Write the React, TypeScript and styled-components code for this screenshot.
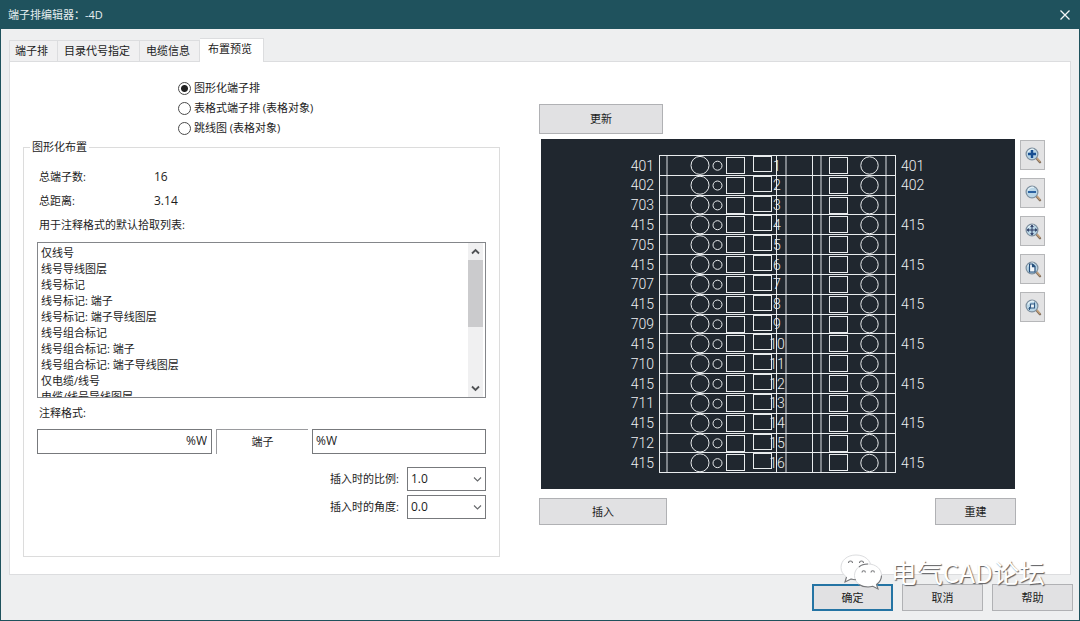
import React, { useState } from "react";
import styled, { createGlobalStyle, css } from "styled-components";

const GlobalStyle = createGlobalStyle`
  *, *::before, *::after { box-sizing: border-box; }
  body {
    margin: 0;
    font-family: "Open Sans", "Noto Sans CJK SC", sans-serif;
    font-size: 11px;
    line-height: 16px;
    color: #1c1c1c;
  }
  button, input, select { font: inherit; color: inherit; }
`;

const Dialog = styled.div`
  position: relative;
  display: flex;
  flex-direction: column;
  min-height: 100vh;
  background: #eeeff0;
  border: 1px solid #1f525d;
  border-top: 0;
`;

const TitleBar = styled.header`
  display: flex;
  align-items: center;
  justify-content: space-between;
  height: 29px;
  padding: 0 8px 0 7px;
  background: #1f525d;
  color: #e6eef0;
`;

const Title = styled.h1`
  margin: 0;
  font-size: 11px;
  font-weight: 400;
`;

const CloseButton = styled.button`
  display: flex;
  padding: 0;
  border: 0;
  background: none;
`;

const Tabs = styled.div`
  display: flex;
  align-items: flex-end;
  padding: 9px 8px 0;
`;

const Tab = styled.button<{ $active?: boolean }>`
  height: 21px;
  padding: 0 9px 0 6px;
  border: 1px solid #dcdddf;
  border-left-width: 0;
  border-bottom: 0;
  background: #f0f0f1;
  white-space: nowrap;
  &:first-child {
    padding-left: 5px;
    border-left-width: 1px;
  }
  ${(p) =>
    p.$active &&
    css`
      z-index: 1;
      height: 24px;
      margin-bottom: -1px;
      padding: 0 11px 4px 8px;
      background: #fff;
    `}
`;

const Panel = styled.main`
  flex: 1;
  display: grid;
  grid-template-columns: 477fr 506fr;
  column-gap: 39px;
  margin: 0 8px;
  padding: 0 25px 17px 13px;
  border: 1px solid #dcdddf;
  background: #fff;
`;

const Settings = styled.section`
  display: flex;
  flex-direction: column;
  min-width: 0;
  padding-top: 16px;
`;

const RadioList = styled.div`
  display: flex;
  flex-direction: column;
  margin: 0 0 1px 155px;
`;

const RadioLabel = styled.label`
  display: flex;
  align-items: center;
  gap: 3px;
  height: 20px;
`;

const Radio = styled.input`
  appearance: none;
  width: 13px;
  height: 13px;
  margin: 0;
  border: 1px solid #4a4a4a;
  border-radius: 50%;
  background: #fff;
  &:checked { background: radial-gradient(circle, #222 3px, #fff 4px); }
`;

const Group = styled.fieldset`
  flex: 1;
  min-width: 0;
  margin: 0;
  padding: 10px 13px 37px;
  border: 1px solid #dcdcdc;
`;

const Legend = styled.legend`
  margin-left: -7px;
  padding: 0 2px;
`;

const Facts = styled.dl`
  display: grid;
  grid-template-columns: 115px 1fr;
  margin: 0 0 0 2px;
  line-height: 24px;
`;

const Value = styled.dd`
  margin: 0;
  font-size: 12px;
`;

const BlockLabel = styled.label<{ $height: number }>`
  display: block;
  margin-left: 2px;
  line-height: ${(p) => p.$height}px;
`;

const ListFrame = styled.div`
  display: flex;
  height: 156px;
  margin: 5px 0 6px;
  padding-right: 2px;
  border: 1px solid #84868a;
`;

const ListBox = styled.select`
  flex: 1;
  min-width: 0;
  height: 100%;
  padding: 1px 0 0;
  border: 0;
  outline: 0;
  background: #fff;
  overflow: hidden;
  scrollbar-width: none;
`;

const ListOption = styled.option`
  height: 16px;
  min-height: 16px;
  padding: 0 3px;
  line-height: 16px;
`;

const ScrollBar = styled.div`
  display: flex;
  flex-direction: column;
  width: 15px;
  background: #f0f0f1;
`;

const ScrollButton = styled.button`
  display: flex;
  align-items: center;
  justify-content: center;
  height: 17px;
  padding: 0;
  border: 0;
  background: none;
`;

const ScrollTrack = styled.div`
  flex: 1;
`;

const ScrollThumb = styled.div`
  height: 67px;
  background: #cbcbcd;
`;

const FormatRow = styled.div`
  display: grid;
  grid-template-columns: 175fr 92fr 174fr;
  column-gap: 4px;
  height: 25px;
  margin: 7px 0 13px;
`;

const TextBox = styled.input<{ $right?: boolean }>`
  min-width: 0;
  padding: 0 4px 2px 3px;
  border: 1px solid #77797c;
  border-radius: 0;
  font-size: 12px;
  text-align: ${(p) => (p.$right ? "right" : "left")};
`;

const SunkenText = styled.div`
  border: solid #9a9b9e;
  border-width: 1px 0 0 1px;
  line-height: 23px;
  text-align: center;
`;

const ComboRow = styled.div`
  display: flex;
  align-items: center;
  justify-content: flex-end;
  gap: 8px;
  margin-bottom: 4px;
  &:last-child { margin-bottom: 0; }
`;

const ComboFrame = styled.div`
  position: relative;
  width: 79px;
  height: 24px;
`;

const ComboSelect = styled.select`
  appearance: none;
  width: 100%;
  height: 100%;
  padding: 0 18px 1px 3px;
  border: 1px solid #77797c;
  border-radius: 0;
  background: #fff;
  font-size: 12px;
`;

const ComboArrow = styled.svg`
  position: absolute;
  top: 9px;
  right: 4px;
  pointer-events: none;
`;

const Preview = styled.section`
  display: grid;
  grid-template-columns: 1fr 25px;
  align-content: start;
  column-gap: 4px;
  min-width: 0;
  padding-top: 42px;
`;

const UpdateRow = styled.div`
  grid-column: 1 / -1;
  height: 30px;
`;

const PushButton = styled.button<{ $width: number; $primary?: boolean }>`
  width: ${(p) => p.$width}px;
  height: 100%;
  padding: 0;
  border: ${(p) => (p.$primary ? "2px solid #2474a4" : "1px solid #b0b1b4")};
  background: #e1e1e3;
`;

const CanvasSlot = styled.div`
  margin-top: 5px;
  padding: 0 1px 0 2px;
`;

const Drawing = styled.svg`
  display: block;
  width: 100%;
  height: 350px;
  background: #20272f;
  font-family: Roboto, sans-serif;
  font-size: 14px;
  font-weight: 300;
`;

const ZoomTools = styled.div`
  display: flex;
  flex-direction: column;
  gap: 8px;
  padding-top: 6px;
`;

const ToolButton = styled.button`
  display: flex;
  flex: none;
  align-items: center;
  justify-content: center;
  height: 30px;
  padding: 0;
  border: 1px solid #b6b7b9;
  background: #e3e3e4;
`;

const PreviewActions = styled.div`
  grid-column: 1;
  display: flex;
  justify-content: space-between;
  height: 27px;
  margin-top: 9px;
`;

const Footer = styled.footer`
  display: flex;
  justify-content: flex-end;
  gap: 9px;
  height: 45px;
  padding: 9px 6px;
`;

const Watermark = styled.div`
  position: absolute;
  right: 34px;
  bottom: 29px;
  display: flex;
  align-items: center;
  gap: 8px;
  font-family: "Noto Sans CJK SC", sans-serif;
  font-size: 26px;
  line-height: 38px;
  color: #fff;
  text-shadow: 1px 1px 1px #5c5d60;
  pointer-events: none;
`;

const tabNames = ["端子排", "目录代号指定", "电缆信息", "布置预览"];
const layouts = ["图形化端子排", "表格式端子排 (表格对象)", "跳线图 (表格对象)"];
const formats = [
  "仅线号",
  "线号导线图层",
  "线号标记",
  "线号标记: 端子",
  "线号标记: 端子导线图层",
  "线号组合标记",
  "线号组合标记: 端子",
  "线号组合标记: 端子导线图层",
  "仅电缆/线号",
  "电缆/线号导线图层",
];

const terminals: [string, string][] = [
  ["401", "401"],
  ["402", "402"],
  ["703", ""],
  ["415", "415"],
  ["705", ""],
  ["415", "415"],
  ["707", ""],
  ["415", "415"],
  ["709", ""],
  ["415", "415"],
  ["710", ""],
  ["415", "415"],
  ["711", ""],
  ["415", "415"],
  ["712", ""],
  ["415", "415"],
];

const stripTop = 16.5;
const pitch = 19.83;
const stripBottom = stripTop + pitch * terminals.length;

function TerminalStrip() {
  return (
    <Drawing viewBox="0 0 474 350" role="img" aria-label="端子排">
      <g fill="none" stroke="#e9ecee" strokeWidth="1">
        {[118.5, 235.5, 271.5, 354.5].map((x) => (
          <path key={x} d={`M${x} ${stripTop}V${stripBottom}`} />
        ))}
        <g stroke="#a6abb0">
          {[126, 245, 280, 345].map((x) => (
            <path key={x} d={`M${x} ${stripTop}V${stripBottom}`} strokeWidth="1.4" />
          ))}
        </g>
        {Array.from({ length: terminals.length + 1 }, (_, i) => {
          const y = Math.round(stripTop + i * pitch - 0.5) + 0.5;
          return <path key={i} d={`M118 ${y}H355`} strokeWidth="1.2" />;
        })}
        {terminals.map((_, i) => {
          const y = stripTop + i * pitch;
          const top = Math.round(y - 0.5) + 0.5;
          return (
            <g key={i}>
              <circle cx="159" cy={y + 9.9} r="9" />
              <circle cx="176.5" cy={y + 10.2} r="4.5" />
              <rect x="185.5" y={top + 2} width="18" height="16" />
              <rect x="212.5" y={top + 1} width="18" height="15" />
              <rect x="288.5" y={top + 2} width="18" height="16" />
              <circle cx="328.5" cy={y + 10} r="8.7" />
            </g>
          );
        })}
      </g>
      <g fill="#eef0f2">
        {terminals.map(([left, right], i) => {
          const y = Math.round(stripTop + i * pitch + 15);
          return (
            <g key={i}>
              <text x="113" y={y} textAnchor="end">{left}</text>
              <text x="236" y={y} textAnchor="middle">{i + 1}</text>
              {right && <text x="360" y={y}>{right}</text>}
            </g>
          );
        })}
      </g>
    </Drawing>
  );
}

const zoomTools: { name: string; mark: React.ReactNode }[] = [
  { name: "放大", mark: <path d="M8 4v8M4 8h8" stroke="#174f92" strokeWidth="2.4" /> },
  { name: "缩小", mark: <path d="M4 8h8" stroke="#2c62a0" strokeWidth="2" /> },
  {
    name: "平移",
    mark: (
      <g>
        <path d="M8 4v8M4 8h8" stroke="#27365f" strokeWidth="1" />
        <path d="M8 2.5l2 2.3H6zM8 13.5l2-2.3H6zM2.5 8l2.3-2v4zM13.5 8l-2.3-2v4z" fill="#27365f" />
      </g>
    ),
  },
  {
    name: "全部",
    mark: <path d="M5.5 4h3.2l2.3 2.4V12H5.5zM8.5 4v2.6H11" fill="#f3f8fb" stroke="#254f7c" strokeWidth="1.2" />,
  },
  {
    name: "窗口",
    mark: (
      <g>
        <path d="M6.5 6h4v4h-4z" fill="#edf4f8" stroke="#305a84" strokeWidth="1.1" />
        <path d="M4.5 10.5h2M5.5 9v3M10.5 4.5V6" stroke="#305a84" strokeWidth="1" />
      </g>
    ),
  },
];

function Magnifier({ children }: { children: React.ReactNode }) {
  return (
    <svg width="18" height="18" viewBox="0 0 18 18" fill="none">
      <path d="M12.5 12.2l3.5 4" stroke="#84705d" strokeWidth="2.4" strokeLinecap="round" />
      <path d="M12.8 12l3.3 3.6" stroke="#cba57c" strokeWidth="1.2" />
      <circle cx="8" cy="8" r="5.9" fill="#b9d5e6" stroke="#7f909f" strokeWidth="1.2" />
      <path d="M4 6.5a4.6 4.6 0 0 1 6-3" stroke="#e5f2f8" strokeWidth="1.2" />
      {children}
    </svg>
  );
}

function Combo({ id, label, value }: { id: string; label: string; value: string }) {
  return (
    <ComboRow>
      <label htmlFor={id}>{label}</label>
      <ComboFrame>
        <ComboSelect id={id} defaultValue={value}>
          <option>{value}</option>
        </ComboSelect>
        <ComboArrow width="9" height="7" viewBox="0 0 9 7" fill="none">
          <path d="M1 1.5l3.5 3.5L8 1.5" stroke="#66686b" strokeWidth="1.1" />
        </ComboArrow>
      </ComboFrame>
    </ComboRow>
  );
}

function ChatBubbles() {
  return (
    <svg width="44" height="38" viewBox="0 0 44 38">
      <g fill="#fff" stroke="#dcdddf" strokeWidth="1">
        <path d="M17 2C8 2 2 7.5 2 14.5c0 4 2 7 5.5 9.5L6 29l6-3c2 .6 4 .8 6 .7C27 26 32 21 32 14.5 32 7.5 26 2 17 2z" />
        <path d="M29 11c-8 0-13.5 5-13.5 11.5S21 34 29 34c1.7 0 3.3-.3 4.8-.7L39 36l-1.5-4.5c3.3-2.3 5-5.4 5-9C42.5 16 37 11 29 11z" />
      </g>
      <g fill="none" stroke="#77787b" strokeWidth="1.1">
        <path d="M7.500 24L6 29l6-3c2 .6 3.500 .8 5 .7" />
        <path d="M20 14c2-2 5-3 9-3M20 31.500c2.500 1.800 5.500 2.500 9 2.500 1.700 0 3.300-.3 4.800-.7L39 36l-1.500-4.500c3.300-2.300 5-5.400 5-9" />
        <path d="M9.5 10a2 2 0 0 1 4 0M20.5 10a2 2 0 0 1 4 0M23 19.5a1.7 1.7 0 0 1 3.4 0M32 19.5a1.7 1.7 0 0 1 3.4 0" />
      </g>
    </svg>
  );
}

export default function App() {
  const [layout, setLayout] = useState(0);
  return (
    <>
      <GlobalStyle />
      <Dialog>
        <TitleBar>
          <Title>端子排编辑器：-4D</Title>
          <CloseButton aria-label="关闭">
            <svg width="12" height="12" viewBox="0 0 12 12">
              <path d="M1.5 1.5l9 9M10.5 1.5l-9 9" stroke="#f2f6f7" strokeWidth="1.3" />
            </svg>
          </CloseButton>
        </TitleBar>
        <Tabs role="tablist">
          {tabNames.map((name, i) => (
            <Tab key={name} role="tab" aria-selected={i === 3} $active={i === 3}>
              {name}
            </Tab>
          ))}
        </Tabs>
        <Panel>
          <Settings>
            <RadioList>
              {layouts.map((name, i) => (
                <RadioLabel key={name}>
                  <Radio type="radio" name="layout" checked={layout === i} onChange={() => setLayout(i)} />
                  {name}
                </RadioLabel>
              ))}
            </RadioList>
            <Group>
              <Legend>图形化布置</Legend>
              <Facts>
                <dt>总端子数:</dt>
                <Value>16</Value>
                <dt>总距离:</dt>
                <Value>3.14</Value>
              </Facts>
              <BlockLabel htmlFor="formats" $height={24}>用于注释格式的默认拾取列表:</BlockLabel>
              <ListFrame>
                <ListBox id="formats" size={10}>
                  {formats.map((f) => (
                    <ListOption key={f}>{f}</ListOption>
                  ))}
                </ListBox>
                <ScrollBar>
                  <ScrollButton aria-label="向上">
                    <svg width="9" height="7" viewBox="0 0 9 7" fill="none">
                      <path d="M1 5.5l3.5-3.5L8 5.5" stroke="#505255" strokeWidth="1.8" />
                    </svg>
                  </ScrollButton>
                  <ScrollTrack>
                    <ScrollThumb />
                  </ScrollTrack>
                  <ScrollButton aria-label="向下">
                    <svg width="9" height="7" viewBox="0 0 9 7" fill="none">
                      <path d="M1 1.5l3.5 3.5L8 1.5" stroke="#505255" strokeWidth="1.8" />
                    </svg>
                  </ScrollButton>
                </ScrollBar>
              </ListFrame>
              <BlockLabel htmlFor="format-left" $height={18}>注释格式:</BlockLabel>
              <FormatRow>
                <TextBox id="format-left" defaultValue="%W" $right />
                <SunkenText>端子</SunkenText>
                <TextBox aria-label="注释格式" defaultValue="%W" />
              </FormatRow>
              <Combo id="scale" label="插入时的比例:" value="1.0" />
              <Combo id="angle" label="插入时的角度:" value="0.0" />
            </Group>
          </Settings>
          <Preview>
            <UpdateRow>
              <PushButton $width={124}>更新</PushButton>
            </UpdateRow>
            <CanvasSlot>
              <TerminalStrip />
            </CanvasSlot>
            <ZoomTools>
              {zoomTools.map((tool) => (
                <ToolButton key={tool.name} aria-label={tool.name}>
                  <Magnifier>{tool.mark}</Magnifier>
                </ToolButton>
              ))}
            </ZoomTools>
            <PreviewActions>
              <PushButton $width={128}>插入</PushButton>
              <PushButton $width={81}>重建</PushButton>
            </PreviewActions>
          </Preview>
        </Panel>
        <Footer>
          <PushButton $width={81} $primary>确定</PushButton>
          <PushButton $width={81}>取消</PushButton>
          <PushButton $width={81}>帮助</PushButton>
        </Footer>
        <Watermark>
          <ChatBubbles />
          电气CAD论坛
        </Watermark>
      </Dialog>
    </>
  );
}
